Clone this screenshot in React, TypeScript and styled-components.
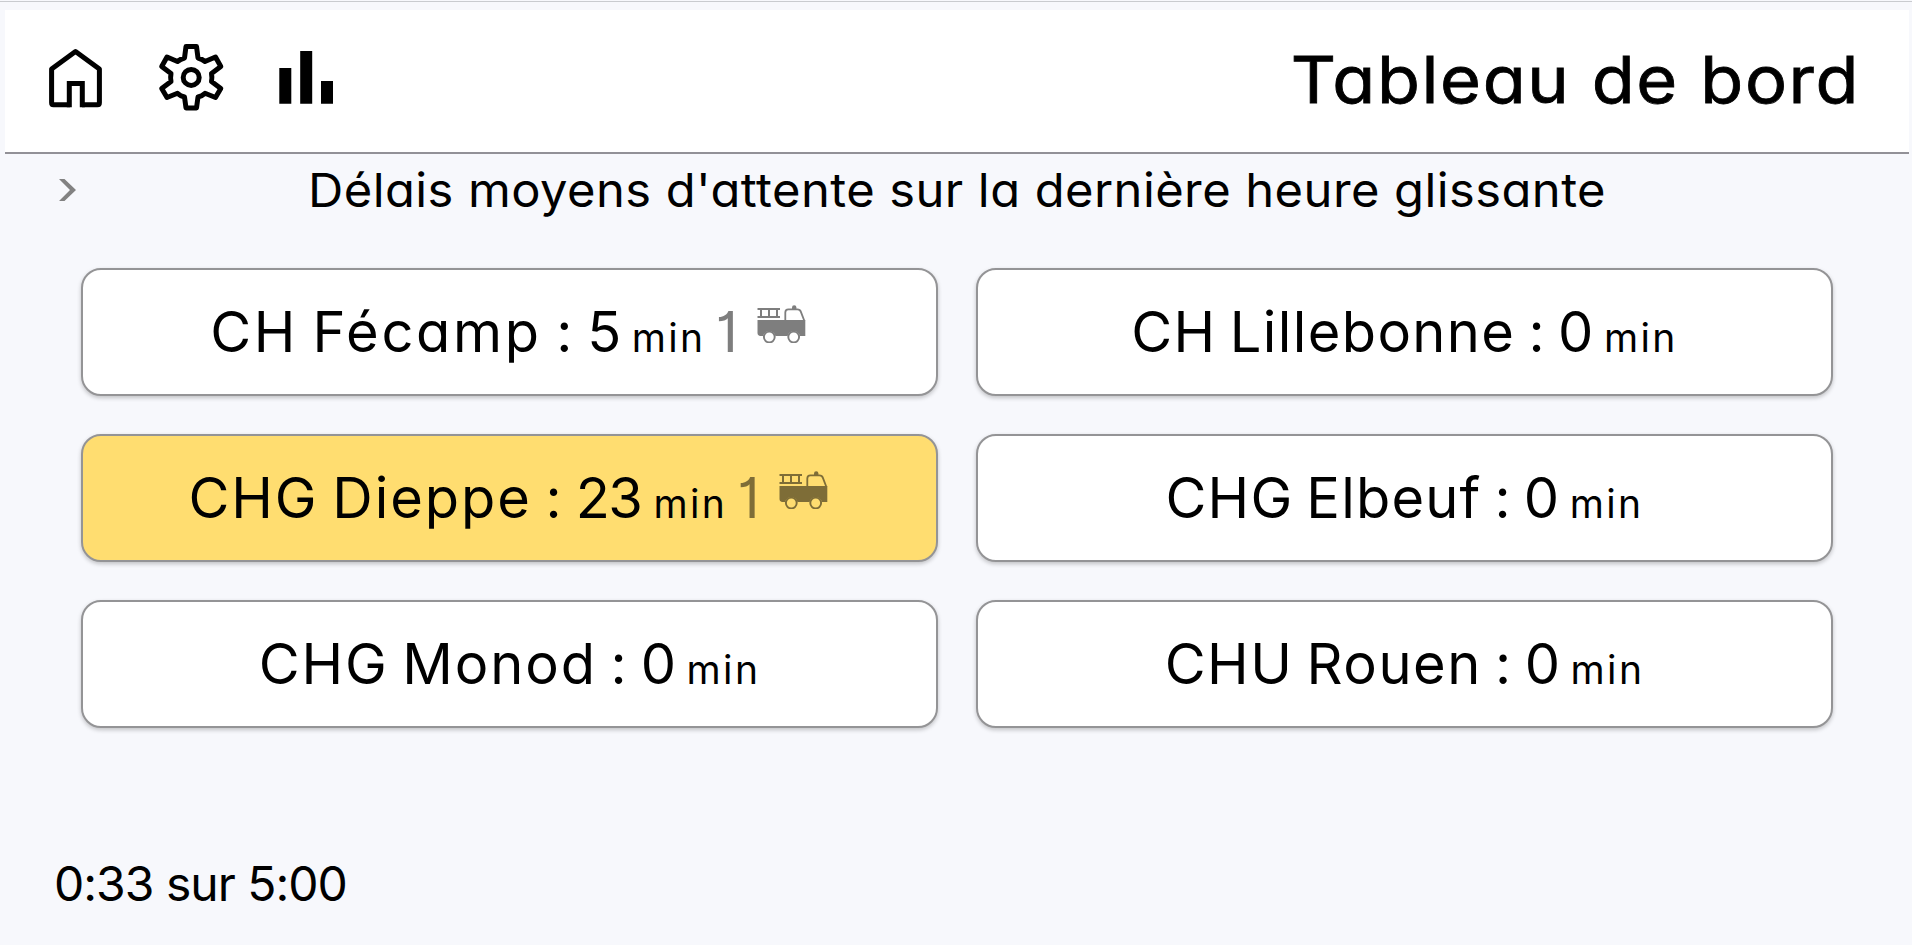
import React from "react";
import styled, { createGlobalStyle } from "styled-components";

const GlobalStyle = createGlobalStyle`
  * { box-sizing: border-box; }
  body {
    margin: 0;
    background: #fff;
    color: #000;
    font-family: Inter, "Open Sans", sans-serif;
    font-feature-settings: "cv11" 1, "cv01" 1;
  }
`;

const Page = styled.div`
  width: 1912px;
  height: 945px;
  display: flex;
  flex-direction: column;
  overflow: hidden;
  background: #f7f8fc;
  border-top: 1px solid #f7f8fc;
`;

const TopLine = styled.div`
  height: 1px;
  flex: none;
  background: #c9cbcf;
`;

const Header = styled.header`
  flex: none;
  height: 144px;
  margin: 8px 3px 0 5px;
  padding: 0 49px 0 43px;
  display: flex;
  justify-content: space-between;
  background: #fff;
  border-bottom: 2px solid #929197;
`;

const Nav = styled.nav`
  display: flex;
  align-items: flex-start;
  padding-top: 33px;
`;

const NavIcon = styled.svg<{ $gap?: number }>`
  display: block;
  margin-left: ${(p) => p.$gap ?? 0}px;
`;

const Title = styled.h1`
  margin: 0;
  padding-top: 30px;
  font-size: 65px;
  line-height: 80px;
  font-weight: 400;
  letter-spacing: 1.5px;
  -webkit-text-stroke: 0.8px #000;
  transform: scaleX(1.08);
  transform-origin: right;
  white-space: nowrap;
`;

const SubHeader = styled.div`
  flex: none;
  height: 114px;
  display: flex;
  padding-left: 59px;
`;

const Chevron = styled.svg`
  margin-top: 25px;
  flex: none;
`;

const Heading = styled.h2`
  margin: 0 0 0 231px;
  padding-top: 5px;
  font-size: 47px;
  line-height: 61px;
  font-weight: 400;
  letter-spacing: 0.42px;
  transform: scaleX(1.04);
  transform-origin: left;
  white-space: nowrap;
`;

const Grid = styled.main`
  flex: none;
  margin: 0 79px 0 81px;
  display: grid;
  grid-template-columns: 857px 857px;
  grid-auto-rows: 128px;
  gap: 38px;
`;

const Card = styled.section<{ $alert?: boolean }>`
  display: flex;
  justify-content: center;
  align-items: baseline;
  padding-top: 28px;
  border: 2px solid #949496;
  border-radius: 20px;
  background: ${(p) => (p.$alert ? "#ffdd70" : "#fff")};
  box-shadow: 0 2px 4px rgba(0, 0, 0, 0.22);
  line-height: 68px;
  white-space: nowrap;
`;

const Name = styled.span<{ $spacing: number }>`
  font-size: 56px;
  letter-spacing: ${(p) => p.$spacing}px;
  word-spacing: -4px;
`;

const Value = styled.span`
  margin-left: 12px;
  font-size: 56px;
  letter-spacing: -1.5px;
`;

const Unit = styled.span`
  margin-left: 12px;
  font-size: 39px;
  letter-spacing: 2.4px;
`;

const Queue = styled.span`
  margin-left: 10px;
  display: flex;
  align-items: baseline;
  font-size: 56px;
  opacity: 0.5;
`;

const TruckSvg = styled.svg`
  margin: 0 3px 0 19px;
  position: relative;
  top: -9px;
`;

const Timer = styled.footer`
  margin-top: 125px;
  padding-left: 54px;
  font-size: 48px;
  line-height: 61px;
  letter-spacing: -1px;
`;

const Truck = () => (
  <TruckSvg width="49" height="38" viewBox="0 0 49 38" fill="none" stroke="#000">
    <path d="M.5 4H23M.5 12H23" strokeWidth="2" />
    <path d="M4 4V12M12 4V12M20 4V12" strokeWidth="2" />
    <path d="M28.3 16V7.5Q28.3 4.4 31.4 4.4H40.5Q43 4.4 43.8 6.6L47.4 16" strokeWidth="1.8" />
    <path d="M35 4V2.4Q35 .3 37.2 .3T39.4 2.4V4Z" fill="#000" stroke="none" />
    <path d="M.5 15H48.3V31H43a6.5 6.5 0 0 0-12.5 0H18.5a6.5 6.5 0 0 0-12.5 0H3.5Q.5 30.5 .5 28Z" fill="#000" stroke="none" />
    <circle cx="12.3" cy="32" r="5.4" strokeWidth="1.9" />
    <circle cx="36.7" cy="32" r="5.4" strokeWidth="1.9" />
  </TruckSvg>
);

const hospitals = [
  { name: "CH Fécamp :", value: 5, queue: 1, spacing: 2.7 },
  { name: "CH Lillebonne :", value: 0, spacing: 1.4 },
  { name: "CHG Dieppe :", value: 23, queue: 1, alert: true, spacing: 1.95 },
  { name: "CHG Elbeuf :", value: 0, spacing: 1.2 },
  { name: "CHG Monod :", value: 0, spacing: 1.9 },
  { name: "CHU Rouen :", value: 0, spacing: 1.5 },
];

export default function App() {
  return (
    <Page>
      <GlobalStyle />
      <TopLine />
      <Header>
        <Nav>
          <NavIcon width="56" height="70" viewBox="0 0 56 70" fill="none" stroke="#000" strokeWidth="5" strokeLinejoin="round">
            <path d="M21.3 64.2V40.5H34.3V64.2" strokeLinejoin="miter" />
            <path d="M22 61.8H5.5Q3.6 61.8 3.6 59.8V26L27.5 8.5L51.4 26V59.8Q51.4 61.8 49.5 61.8H34" />
          </NavIcon>
          <NavIcon $gap={54} width="68" height="70" viewBox="0 0 68 70" fill="none" stroke="#000" strokeWidth="5" strokeLinejoin="round">
            <path d="M28 3.5H38.5L40 15Q44 16 47 18.5L57.500 14L62.800 23.500L53.500 30.500Q54.300 34.500 53.500 38.500L62.800 45.500L57.500 54.500L47 50.300Q44 53 40 54L38.500 65H28L26.500 54Q22.500 53 19.500 50.300L9 54.500L3.700 45.500L13 38.500Q12.200 34.500 13 30.500L3.700 23.500L9 14L19.500 18.500Q22.500 16 26.500 15Z" />
            <circle cx="33.2" cy="34.400" r="8" />
          </NavIcon>
          <NavIcon $gap={53} width="54" height="70" viewBox="0 0 54 70">
            <path d="M.3 25H12.300V60.700H.3ZM21.200 8H33.200V60.700H21.200ZM42 38H54V60.700H42Z" />
          </NavIcon>
        </Nav>
        <Title>Tableau de bord</Title>
      </Header>
      <SubHeader>
        <Chevron width="18" height="22" viewBox="0 0 18 22">
          <path d="M0 0H5.500L17 11L5.500 22H0L11 11Z" fill="#828282" />
        </Chevron>
        <Heading>Délais moyens d'attente sur la dernière heure glissante</Heading>
      </SubHeader>
      <Grid>
        {hospitals.map((h) => (
          <Card key={h.name} $alert={h.alert}>
            <Name $spacing={h.spacing}>{h.name}</Name>
            <Value>{h.value}</Value>
            <Unit>min</Unit>
            {h.queue && (
              <Queue>
                {h.queue}
                <Truck />
              </Queue>
            )}
          </Card>
        ))}
      </Grid>
      <Timer>0:33 sur 5:00</Timer>
    </Page>
  );
}
